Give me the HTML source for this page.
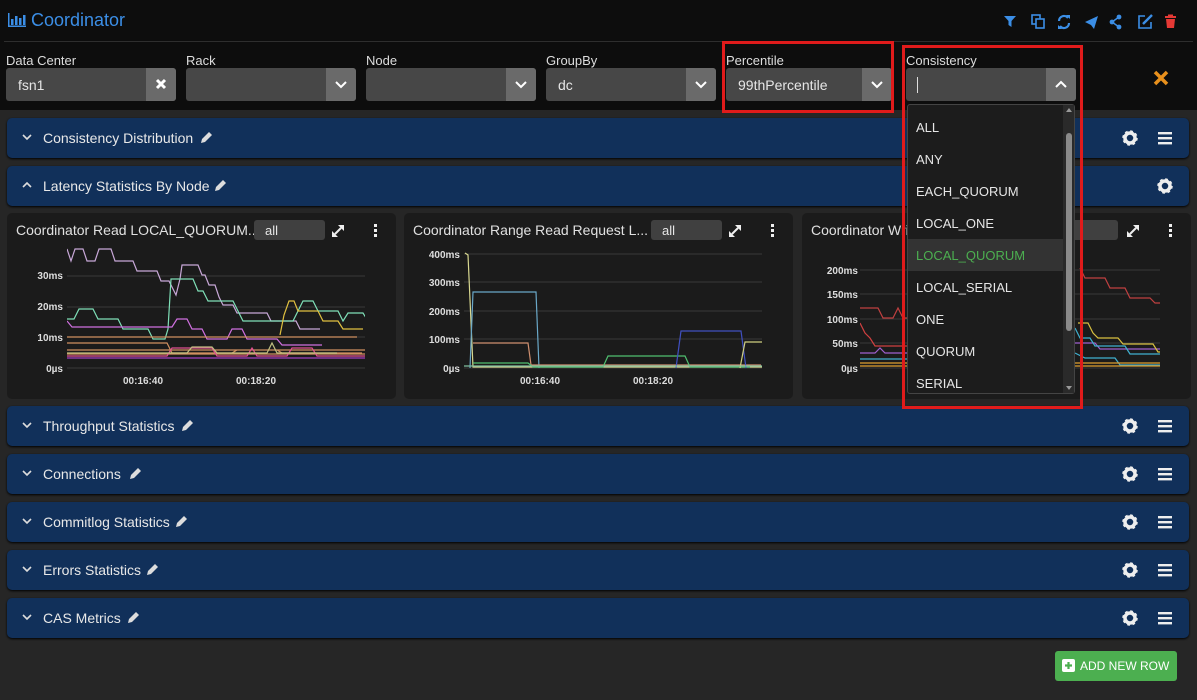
<!DOCTYPE html>
<html><head><meta charset="utf-8"><style>
*{box-sizing:border-box;margin:0;padding:0}
body{width:1197px;height:700px;background:#262626;font-family:"Liberation Sans",sans-serif;color:#ddd;position:relative;overflow:hidden}
.a{position:absolute}
.top{left:0;top:0;width:1197px;height:110px;background:#0d0d0d}
.hline{left:4px;top:41px;width:1189px;height:1px;background:#2e2e2e}
.title{left:8px;top:10px;font-size:18px;color:#3b8ee6}
.lbl{font-size:13px;color:#ddd;top:53px}
.sel{top:68px;height:33px;background:#474747;border-radius:3px;font-size:14px;color:#e6e6e6;padding:9px 12px}
.sel .btn{position:absolute;right:0;top:0;width:30px;height:33px;background:#6a6a6a;border-radius:0 3px 3px 0}
.row{left:7px;width:1182px;height:40px;background:#11305a;border-radius:5px;box-shadow:0 1px 2px #000}
.row .t{position:absolute;left:36px;top:12px;font-size:14px;color:#e8e8e8}
.row .chev{position:absolute;left:15px;top:14px}
.panel{top:213px;height:186px;width:389px;background:#1b1b1b;border-radius:5px}
.ptitle{position:absolute;left:9px;top:9px;font-size:14px;color:#e0e0e0;white-space:nowrap}
.all{position:absolute;top:7px;width:71px;height:20px;background:#404040;border-radius:3px;font-size:13px;color:#e6e6e6;padding:3px 11px}
.dd{left:907px;top:104px;width:168px;height:290px;background:#1c1c1c;border:1px solid #444;border-radius:3px;overflow:hidden}
.dd div{height:32px;font-size:13px;color:#e6e6e6;padding:9px 8px}
.red{border:3px solid #e01b1b}
svg text{font-family:"Liberation Sans",sans-serif;font-size:10px;fill:#ddd;font-weight:bold}
</style></head><body>
<div class="a top"></div>
<div class="a hline"></div>
<div class="a title"><svg width="18" height="14" style="vertical-align:-1px"><g fill="#3b8ee6"><rect x="0" y="0" width="1.5" height="14"/><rect x="0" y="12.5" width="18" height="1.5"/><rect x="3" y="6" width="2.5" height="6"/><rect x="7" y="3" width="2.5" height="9"/><rect x="11" y="5" width="2.5" height="7"/><rect x="15" y="2" width="2.5" height="10"/></g></svg> Coordinator</div>
<!-- header icons -->
<svg class="a" style="left:1000px;top:10px" width="197" height="22">
<g fill="#3b8ee6" stroke="#3b8ee6">
<path d="M4 6h12l-4.5 5v6l-3-2v-4z" stroke="none"/>
<rect x="32" y="5" width="8" height="9" fill="none" stroke-width="1.6"/><rect x="36" y="9" width="8" height="9" fill="#0d0d0d" stroke-width="1.6"/>
<path d="M59 11a5 5 0 0 1 9-3M69 13a5 5 0 0 1-9 3" fill="none" stroke-width="2.2"/><path d="M66 5h4v4zM62 19h-4v-4z" stroke="none"/>
<path d="M85 12l13-6-4 13-3-4z" stroke="none"/>
<circle cx="119" cy="7" r="2.4" stroke="none"/><circle cx="119" cy="17" r="2.4" stroke="none"/><circle cx="112" cy="12" r="2.4" stroke="none"/><path d="M112 12l7-5M112 12l7 5" stroke-width="1.5"/>
<path d="M145 6h-6v12h12v-6" fill="none" stroke-width="1.6"/><path d="M143 14l9-9" stroke-width="2.4"/>
</g>
<g fill="#e53935"><rect x="165" y="6" width="11" height="2"/><rect x="168" y="4.5" width="5" height="2"/><path d="M166 9h9l-1 9h-7z"/></g>
</svg>
<!-- filters -->
<div class="a lbl" style="left:6px">Data Center</div>
<div class="a sel" style="left:6px;width:170px">fsn1<div class="btn"><svg width="30" height="33"><path d="M11 12l8 8M19 12l-8 8" stroke="#fff" stroke-width="3"/></svg></div></div>
<div class="a lbl" style="left:186px">Rack</div>
<div class="a sel" style="left:186px;width:170px"><div class="btn"><svg width="30" height="33"><path d="M10 14l5 5 5-5" stroke="#fff" stroke-width="2" fill="none"/></svg></div></div>
<div class="a lbl" style="left:366px">Node</div>
<div class="a sel" style="left:366px;width:170px"><div class="btn"><svg width="30" height="33"><path d="M10 14l5 5 5-5" stroke="#fff" stroke-width="2" fill="none"/></svg></div></div>
<div class="a lbl" style="left:546px">GroupBy</div>
<div class="a sel" style="left:546px;width:170px">dc<div class="btn"><svg width="30" height="33"><path d="M10 14l5 5 5-5" stroke="#fff" stroke-width="2" fill="none"/></svg></div></div>
<div class="a lbl" style="left:726px">Percentile</div>
<div class="a sel" style="left:726px;width:166px">99thPercentile<div class="btn"><svg width="30" height="33"><path d="M10 14l5 5 5-5" stroke="#fff" stroke-width="2" fill="none"/></svg></div></div>
<div class="a lbl" style="left:906px">Consistency</div>
<div class="a sel" style="left:906px;width:170px"><span style="display:inline-block;width:1px;height:16px;background:#ddd;margin-left:-1px;vertical-align:-3px"></span><div class="btn"><svg width="30" height="33"><path d="M10 19l5-5 5 5" stroke="#fff" stroke-width="2" fill="none"/></svg></div></div>
<svg class="a" style="left:1151px;top:68px" width="20" height="20"><path d="M4 4l12 12M16 4L4 16" stroke="#e8901c" stroke-width="3.5"/></svg>
<!-- rows -->
<div class="a row" style="top:118px"><svg class="chev" width="10" height="10"><path d="M1 3l4 4 4-4" stroke="#ddd" stroke-width="1.6" fill="none"/></svg><div class="t">Consistency Distribution</div></div>
<div class="a row" style="top:166px"><svg class="chev" width="10" height="10"><path d="M1 7l4-4 4 4" stroke="#ddd" stroke-width="1.6" fill="none"/></svg><div class="t">Latency Statistics By Node</div></div>
<div class="a row" style="top:406px"><svg class="chev" width="10" height="10"><path d="M1 3l4 4 4-4" stroke="#ddd" stroke-width="1.6" fill="none"/></svg><div class="t">Throughput Statistics</div></div>
<div class="a row" style="top:454px"><svg class="chev" width="10" height="10"><path d="M1 3l4 4 4-4" stroke="#ddd" stroke-width="1.6" fill="none"/></svg><div class="t">Connections</div></div>
<div class="a row" style="top:502px"><svg class="chev" width="10" height="10"><path d="M1 3l4 4 4-4" stroke="#ddd" stroke-width="1.6" fill="none"/></svg><div class="t">Commitlog Statistics</div></div>
<div class="a row" style="top:550px"><svg class="chev" width="10" height="10"><path d="M1 3l4 4 4-4" stroke="#ddd" stroke-width="1.6" fill="none"/></svg><div class="t">Errors Statistics</div></div>
<div class="a row" style="top:598px"><svg class="chev" width="10" height="10"><path d="M1 3l4 4 4-4" stroke="#ddd" stroke-width="1.6" fill="none"/></svg><div class="t">CAS Metrics</div></div>
<svg class="a" style="left:0;top:0;pointer-events:none" width="1197" height="700">
<defs>
<g id="pen"><path d="M0 11l1-4 7-7 3 3-7 7z" fill="#ddd"/></g>
<g id="gear"><circle cx="0" cy="0" r="5" fill="none" stroke="#eee" stroke-width="3.5"/><circle cx="0" cy="0" r="6.5" fill="none" stroke="#eee" stroke-width="2.5" stroke-dasharray="2.6 2.5"/></g>
<g id="menu" fill="#eee"><rect x="0" y="0" width="14" height="2.4"/><rect x="0" y="5" width="14" height="2.4"/><rect x="0" y="10" width="14" height="2.4"/></g>
</defs>
<use href="#pen" x="201" y="132"/><use href="#pen" x="215" y="180"/><use href="#pen" x="182" y="420"/><use href="#pen" x="130" y="468"/><use href="#pen" x="176" y="516"/><use href="#pen" x="147" y="564"/><use href="#pen" x="128" y="612"/>
<use href="#gear" x="1130" y="138"/><use href="#menu" x="1158" y="132"/>
<use href="#gear" x="1165" y="186"/>
<use href="#gear" x="1130" y="426"/><use href="#menu" x="1158" y="420"/>
<use href="#gear" x="1130" y="474"/><use href="#menu" x="1158" y="468"/>
<use href="#gear" x="1130" y="522"/><use href="#menu" x="1158" y="516"/>
<use href="#gear" x="1130" y="570"/><use href="#menu" x="1158" y="564"/>
<use href="#gear" x="1130" y="618"/><use href="#menu" x="1158" y="612"/>
</svg>
<!-- panels -->
<div class="a panel" style="left:7px"><div class="ptitle">Coordinator Read LOCAL_QUORUM...</div><div class="all" style="left:247px">all</div></div>
<div class="a panel" style="left:404px"><div class="ptitle">Coordinator Range Read Request L...</div><div class="all" style="left:247px">all</div></div>
<div class="a panel" style="left:802px"><div class="ptitle">Coordinator Write</div><div class="all" style="left:245px">all</div></div>
<svg class="a" style="left:0;top:213px" width="1197" height="186">
<defs>
<clipPath id="c1"><rect x="67" y="30" width="298" height="130"/></clipPath>
<clipPath id="c2"><rect x="464" y="30" width="298" height="130"/></clipPath>
<clipPath id="c3"><rect x="860" y="30" width="300" height="130"/></clipPath>
</defs>
<g id="ic"><path d="M335 21l6-6" stroke="#eee" stroke-width="2"/><path d="M332 24v-6l6 6zM344 12v6l-6-6z" fill="#eee"/><g fill="#eee"><rect x="374" y="11" width="3" height="3"/><rect x="374" y="16" width="3" height="3"/><rect x="374" y="21" width="3" height="3"/></g></g>
<use href="#ic" x="397"/><use href="#ic" x="795"/>
<g stroke="#3a3a3a" stroke-width="1"><path d="M67 63H365M67 94H365M67 124H365M67 155H365"/><path d="M464 41H762M464 69H762M464 98H762M464 126H762M464 155H762"/><path d="M860 57H1160M860 81H1160M860 106H1160M860 130H1160M860 155H1160"/></g>
<g text-anchor="end"><text x="63" y="66">30ms</text><text x="63" y="97">20ms</text><text x="63" y="128">10ms</text><text x="63" y="159">0µs</text>
<text x="460" y="45">400ms</text><text x="460" y="73">300ms</text><text x="460" y="102">200ms</text><text x="460" y="130">100ms</text><text x="460" y="159">0µs</text>
<text x="858" y="61">200ms</text><text x="858" y="85">150ms</text><text x="858" y="110">100ms</text><text x="858" y="134">50ms</text><text x="858" y="159">0µs</text></g>
<g text-anchor="middle"><text x="143" y="171">00:16:40</text><text x="256" y="171">00:18:20</text><text x="540" y="171">00:16:40</text><text x="653" y="171">00:18:20</text></g>
<g fill="none" stroke-width="1.2" clip-path="url(#c1)">
<path d="M67 36l4 12 4-12h8l4 12h8l4-12h12l4 12h18l4 10h20l4 10h8l4 8 3 6 4-16 2-14h16l4 10h3l4 10h6l4 12 4 8h10l4 8h30l4 8h25l4 8h20" stroke="#c8a8d8"/>
<path d="M67 106h7l5-10h14l5 10h20l5 10h25l5 10h12l3-10 3-50h22l5 12h5l5 10h25l5 10 5 10h50l5-10 5-10h10l5 10h20l5 10 5-8h15l5 8h15" stroke="#7fe0b8"/>
<path d="M67 108l5 6h100l5-8h10l5 10h10l5 10h20l5-10h10l5 10h30l5 6h40" stroke="#d070e0"/>
<path d="M280 122l4-20 5-14h5l4 10h20l5 10h15l5 8h20" stroke="#e0c040"/>
<path d="M67 124h290M67 130h100l5 10h60l5-3h40l5 3h80M67 141h300M67 137h300" stroke="#d09060"/>
<path d="M67 143h100l5-8h40l5 8h30l5-8 5 8h30l5-8h20l5 8h50" stroke="#e05090"/>
<path d="M67 140h120l5-6h20l5 6h50l5-10 5 10h60" stroke="#c0c080"/>
<path d="M67 145h298" stroke="#a040c0"/>
</g>
<g fill="none" stroke-width="1.2" clip-path="url(#c2)">
<path d="M465 40l3 2 5 112h290" stroke="#d8d890"/>
<path d="M470 155l3-76h63l3 76" stroke="#6aa8c8"/>
<path d="M473 130h55l3 22h230" stroke="#d09070"/>
<path d="M473 150h55l5 4h70l5-11h77l5 11h60" stroke="#50c070"/>
<path d="M676 155l5-37h60l5 37" stroke="#4050c0"/>
<path d="M740 155l5-26h17" stroke="#d0d080"/>
<path d="M464 153h300" stroke="#80c0a0"/>
</g>
<g fill="none" stroke-width="1.2" clip-path="url(#c3)">
<path d="M860 95h18l5 10h10l5-10 5 10h20" stroke="#c04040"/>
<path d="M1080 55l5 10h20l5 10h15l5 10h20l5 5h10" stroke="#c04040"/>
<path d="M860 110l5 10 5 5 5 8h40" stroke="#d04040"/>
<path d="M860 140h15l5-5 5 5h40M1075 130h20l5 6h60" stroke="#a060d0"/>
<path d="M860 146h60M1075 140l10 5h30l5 7h40M1075 115l5 10h10l5 8h30l5 8h30" stroke="#40b0d0"/>
<path d="M1078 110h10l5 10 5 5h20l5 6h30l5 8h10" stroke="#d8c040"/>
<path d="M860 150h300M860 153h300" stroke="#e0a030"/>
</g>
</svg>
<!-- dropdown -->
<div class="a dd">
<div style="height:6px;padding:0"></div>
<div>ALL</div><div>ANY</div><div>EACH_QUORUM</div><div>LOCAL_ONE</div><div style="background:#333;color:#4caf50">LOCAL_QUORUM</div><div>LOCAL_SERIAL</div><div>ONE</div><div>QUORUM</div><div>SERIAL</div>
</div>
<div class="a" style="left:1063px;top:105px;width:11px;height:288px;background:#2a2a2a"></div>
<div class="a" style="left:1066px;top:133px;width:6px;height:198px;background:#8a8a8a;border-radius:3px"></div>
<svg class="a" style="left:1064px;top:105px" width="10" height="288"><path d="M2 7l3-4 3 4zM2 281l3 4 3-4z" fill="#999"/></svg>
<div class="a red" style="left:722px;top:41px;width:172px;height:72px"></div>
<div class="a red" style="left:902px;top:45px;width:181px;height:364px"></div>
<!-- add row -->
<div class="a" style="left:1055px;top:651px;width:122px;height:30px;background:#4caf50;border-radius:3px;color:#fff;font-size:12px;padding:8px 0 0 25px">ADD NEW ROW</div>
<svg class="a" style="left:1062px;top:659px" width="14" height="14"><rect width="13" height="13" rx="2" fill="#fff"/><path d="M6.5 3v7M3 6.5h7" stroke="#4caf50" stroke-width="2.2"/></svg>
</body></html>
